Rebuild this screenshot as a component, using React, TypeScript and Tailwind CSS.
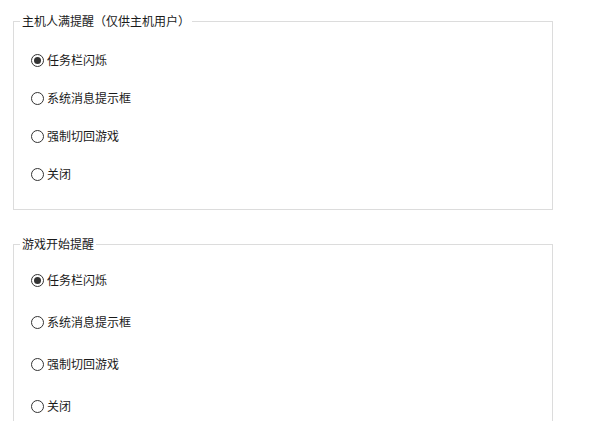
import React from 'react';

interface RadioGroupProps {
  title: string;
  selected: number;
  rowHeight: string;
  topPad: string;
  height: string;
}

const options = ['任务栏闪烁', '系统消息提示框', '强制切回游戏', '关闭'];

function Radio({ checked }: { checked: boolean }) {
  return (
    <span className="w-[13px] h-[13px] rounded-full border border-[#333333] bg-white flex items-center justify-center shrink-0">
      {checked && <span className="w-[7px] h-[7px] rounded-full bg-[#333333]" />}
    </span>
  );
}

function RadioGroup({ title, selected, rowHeight, topPad, height }: RadioGroupProps) {
  return (
    <fieldset className={`border border-[#dcdcdc] w-[540px] shrink-0 ${height}`}>
      <legend className="ml-[6px] px-[2px] text-[12px] leading-[16px] text-[#1a1a1a]">{title}</legend>
      <div className={`flex flex-col pl-[17px] ${topPad}`}>
        {options.map((opt, i) => (
          <label key={opt} className={`flex items-center gap-[3px] ${rowHeight} text-[12px] text-[#1a1a1a]`}>
            <Radio checked={i === selected} />
            <span>{opt}</span>
          </label>
        ))}
      </div>
    </fieldset>
  );
}

export default function App() {
  return (
    <div
      className="w-[600px] h-[421px] overflow-hidden bg-white pl-[13px] pt-[13px] flex flex-col gap-[26px]"
      style={{ fontFamily: '"Noto Sans CJK SC", "Noto Sans", sans-serif' }}
    >
      <RadioGroup title="主机人满提醒（仅供主机用户）" selected={0} rowHeight="h-[38px]" topPad="pt-[12px]" height="h-[197px]" />
      <RadioGroup title="游戏开始提醒" selected={0} rowHeight="h-[42px]" topPad="pt-[7px]" height="h-[220px]" />
    </div>
  );
}
